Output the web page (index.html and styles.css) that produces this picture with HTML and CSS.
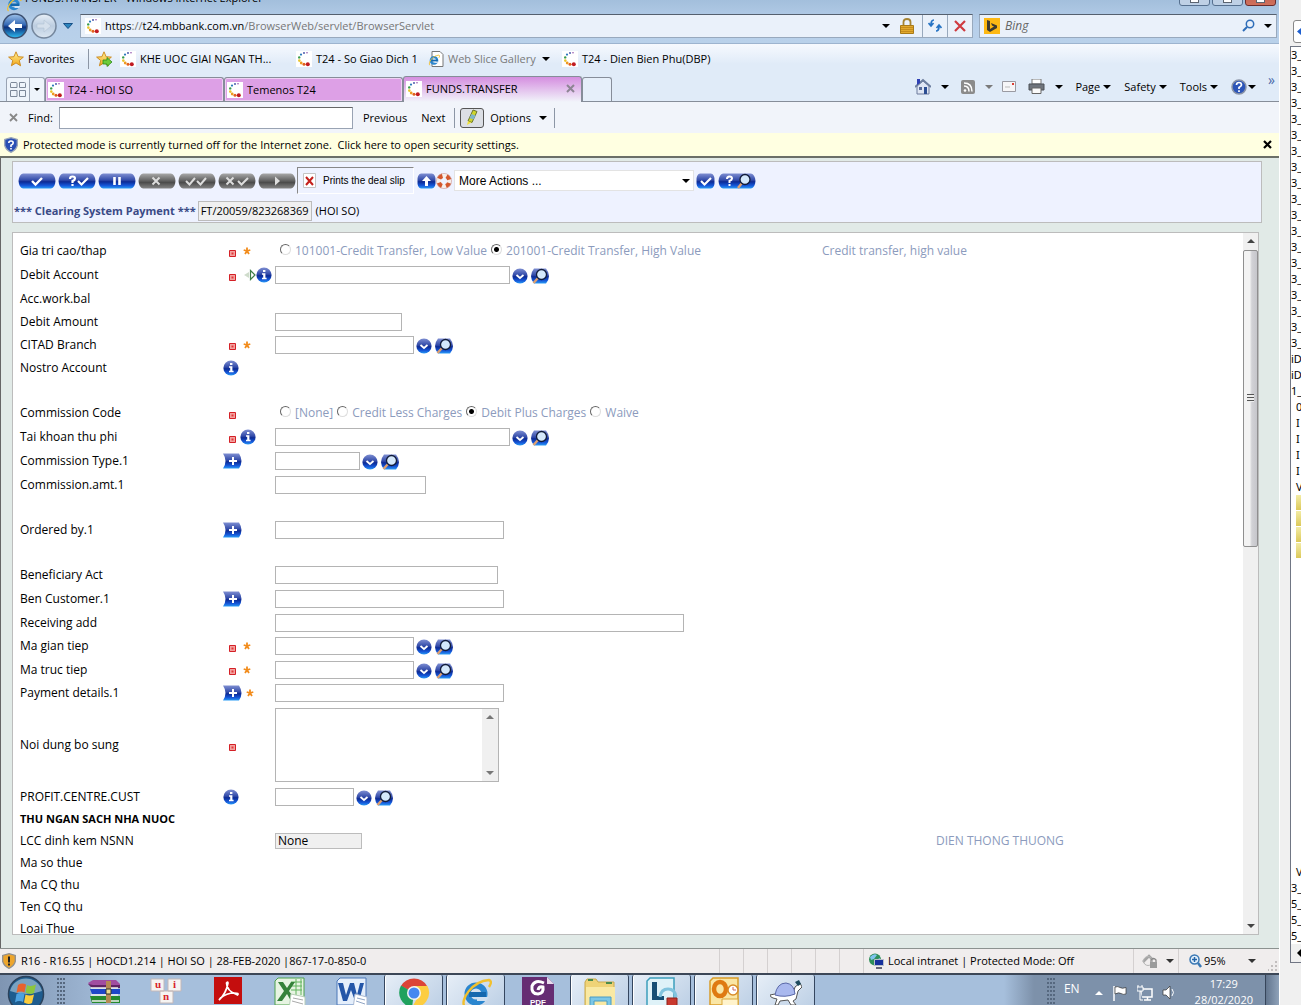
FILE: index.html
```html
<!DOCTYPE html>
<html lang="en">
<head>
<meta charset="utf-8">
<title>FUNDS.TRANSFER - Windows Internet Explorer</title>
<link rel="stylesheet" href="styles.css">
</head>
<body>
<svg class="defs" aria-hidden="true">
  <defs>
    <linearGradient id="blue" x1="0" y1="0" x2="0" y2="1"><stop offset="0" stop-color="#7f8fd2"/><stop offset=".45" stop-color="#3049a8"/><stop offset=".55" stop-color="#0c2a94"/><stop offset=".8" stop-color="#1557d8"/><stop offset="1" stop-color="#2a9cf5"/></linearGradient>
    <linearGradient id="gray" x1="0" y1="0" x2="0" y2="1"><stop offset="0" stop-color="#a8a8a8"/><stop offset=".45" stop-color="#666"/><stop offset=".6" stop-color="#4c4c4c"/><stop offset="1" stop-color="#858585"/></linearGradient>
    <linearGradient id="orb" x1="0" y1="0" x2="0" y2="1"><stop offset="0" stop-color="#9fc3ea"/><stop offset=".45" stop-color="#3468b4"/><stop offset=".55" stop-color="#0c2f7c"/><stop offset="1" stop-color="#2fc0f4"/></linearGradient>
    <linearGradient id="pale" x1="0" y1="0" x2="0" y2="1"><stop offset="0" stop-color="#e9f0f8"/><stop offset=".5" stop-color="#bccde0"/><stop offset="1" stop-color="#dbe6f1"/></linearGradient>
    <linearGradient id="gold" x1="0" y1="0" x2="0" y2="1"><stop offset="0" stop-color="#fff29a"/><stop offset="1" stop-color="#f2a516"/></linearGradient>
  </defs>
  <symbol id="t24" viewBox="0 0 16 16"><path fill="#fff" d="M0 0h16v16H0z"/><circle cx="11" cy="1.8" r=".7" fill="#7b2f9a"/><circle cx="8" cy="2" r=".9" fill="#3a4aa5"/><circle cx="5" cy="3.6" r="1.1" fill="#2c7abc"/><circle cx="3.2" cy="6.4" r="1.2" fill="#3a9c4a"/><circle cx="3.3" cy="9.6" r="1.3" fill="#e9c52c"/><circle cx="5.2" cy="12" r="1.4" fill="#ee9a22"/><circle cx="8" cy="13.3" r="1.5" fill="#e1601d"/><circle cx="11.8" cy="13.3" r="2" fill="#c11b22"/></symbol>
  <symbol id="ie" viewBox="0 0 32 32"><circle cx="16" cy="17" r="8.5" fill="none" stroke="#2a86cf" stroke-width="6"/><path d="M9 15h17v5H9z" fill="#1467ae"/><path d="M17 20h12l-3 4h-9z" fill="#cfe0f2"/><path d="M5 30C-1 24 12 4 29 3c3 1 2 4 0 7" fill="none" stroke="#f2c02e" stroke-width="2.4"/></symbol>
  <symbol id="star" viewBox="0 0 16 16"><path d="M8 .8l2.1 4.9 5.3.4-4.1 3.4 1.3 5.3L8 11.9l-4.6 2.9 1.3-5.3L.6 6.1l5.3-.4z" fill="url(#gold)" stroke="#c98618" stroke-width=".9"/></symbol>
  <symbol id="info" viewBox="0 0 16 16"><circle cx="8" cy="8" r="7.6" fill="url(#blue)"/><path d="M7 3h2.4v2H7zM6 6.3h3.4v4.5h1.2v1.4H6v-1.4h1.2V7.7H6z" fill="#fff"/></symbol>
  <symbol id="drop" viewBox="0 0 16 16"><circle cx="8" cy="8" r="7.6" fill="url(#blue)"/><path d="M4.5 7L8 10l3.500-3" fill="none" stroke="#fff" stroke-width="1.8"/></symbol>
  <symbol id="find" viewBox="0 0 20 16"><path d="M4 .5h12q6 7.500 0 15H4q-6-7.500 0-15z" fill="url(#blue)"/><path d="M8 10l-4.500 5" stroke="#e0a070" stroke-width="2.400"/><circle cx="11.500" cy="6.500" r="5" fill="#d4e8fb" stroke="#111c3a" stroke-width="1.300"/></symbol>
  <symbol id="plus" viewBox="0 0 20 16"><path d="M0 .5h16q5 7.500 0 15H0q5-7.500 0-15z" fill="url(#blue)"/><path d="M6 8h8M10 4v8" stroke="#fff" stroke-width="2"/></symbol>
  <symbol id="req" viewBox="0 0 7 7"><path d="M.5.5h6v6h-6z" fill="#f3a2a0" stroke="#d42026"/><path d="M2.500 2.500h2v2h-2z" fill="#e03a3a"/></symbol>
  <symbol id="ast" viewBox="0 0 8 8"><path d="M4 .5v3.500M4 4L.7 3M4 4l3.300-1M4 4L2 7M4 4l2 3" stroke="#f28c1c" stroke-width="1.800"/></symbol>
  <symbol id="tri" viewBox="0 0 8 4"><path d="M0 0h8L4 4z" fill="currentColor"/></symbol>
  <symbol id="triup" viewBox="0 0 8 4"><path d="M0 4h8L4 0z" fill="currentColor"/></symbol>
  <symbol id="dots" viewBox="0 0 8 32"><g fill="#56687f"><path id="dr" d="M0 1h2v2H0zM3 1h2v2H3zM6 1h2v2H6z"/><use href="#dr" y="4"/><use href="#dr" y="8"/><use href="#dr" y="12"/><use href="#dr" y="16"/><use href="#dr" y="20"/><use href="#dr" y="24"/><use href="#dr" y="28"/></g></symbol>
  <symbol id="pb" viewBox="0 0 38 16"><path d="M5 .5h28q4 1 4.500 7.500-.5 6.500-4.500 7.500H5Q1 14.500.5 8 1 1.500 5 .5z"/></symbol>
</svg>

<div class="screen">
<div class="desktop">
  <header class="frame">
    <div class="titlebar">
      <svg class="i16"><use href="#ie"/></svg><span class="title">FUNDS.TRANSFER - Windows Internet Explorer</span>
      <span class="caption"><button aria-label="Minimize"><i></i></button><button aria-label="Restore"><i></i></button><button class="close" aria-label="Close"><i></i></button></span>
    </div>
    <div class="address">
      <button class="plain" aria-label="Back"><svg width="26" height="26" viewBox="0 0 26 26"><circle cx="13" cy="13" r="12" fill="url(#orb)" stroke="#3b4f70" stroke-width="1.500"/><path d="M6 13l7-6v4h7v4h-7v4z" fill="#fff"/></svg></button>
      <button class="plain" aria-label="Forward"><svg width="26" height="26" viewBox="0 0 26 26"><circle cx="13" cy="13" r="12" fill="url(#pale)" stroke="#74869c" stroke-width="1.500"/><path d="M20 13l-7-6v4H6v4h7v4z" fill="#d5e0ec" stroke="#b3c3d4" stroke-width=".6"/></svg></button>
      <button class="plain recent" aria-label="Recent pages"><svg width="10" height="6"><path d="M.5.5h9L5 5.500z" fill="#2b84bd" stroke="#174f86"/></svg></button>
      <div class="urlbox">
        <svg class="i16"><use href="#t24"/></svg>
        <span class="url"><b>https</b>://<b>t24.mbbank.com.vn</b>/BrowserWeb/servlet/BrowserServlet</span>
        <svg class="tri"><use href="#tri"/></svg>
        <svg class="lock" width="14" height="16" viewBox="0 0 14 16"><path d="M3.500 8V4q0-3 3.500-3t3.500 3v4" fill="none" stroke="#a58434" stroke-width="1.800"/><path d="M.5 7.500h13v8H.5z" fill="#e2a92c" stroke="#a97a17"/><path d="M1 9.500h12M1 11.500h12M1 13.500h12" stroke="#c68c1c"/></svg>
        <button class="cell" aria-label="Refresh"><svg width="14" height="13" viewBox="0 0 14 13"><path d="M6 1Q3 1 3 6M0.500 4L3 7l2.500-3M8 12q3 0 3-5M8.500 9L11 6l2.500 3" fill="none" stroke="#2573c4" stroke-width="1.700"/></svg></button>
        <button class="cell" aria-label="Stop"><svg width="12" height="12"><path d="M1 1l10 10M11 1L1 11" stroke="#cf3b40" stroke-width="2.200"/></svg></button>
      </div>
      <div class="searchbox">
        <svg width="16" height="16"><path d="M0 0h16v16H0z" fill="#fdb813"/><path d="M3 2l3 1v8l4-2.500-2-1L7 5l6 2.500V10l-7 4-3-2z" fill="#3e3a30"/></svg>
        <input type="text" placeholder="Bing" aria-label="Search">
        <svg width="13" height="13"><circle cx="8" cy="5" r="3.700" fill="none" stroke="#2d6db8" stroke-width="1.500"/><path d="M5 8l-4 4" stroke="#2d6db8" stroke-width="2"/></svg>
        <svg class="tri"><use href="#tri"/></svg>
      </div>
    </div>
  </header>

  <nav class="favbar">
    <svg class="i16"><use href="#star"/></svg><span class="favlabel">Favorites</span><i class="vsep"></i>
    <svg class="i16" viewBox="0 0 16 16"><use href="#star"/><path d="M7 9h4V6.500l5 4.500-5 4.500V13H7z" fill="#6ecb3a" stroke="#2a8a1c" stroke-width=".8"/></svg>
    <a href="#" class="fav f1"><svg class="i16"><use href="#t24"/></svg>KHE UOC GIAI NGAN TH...</a>
    <a href="#" class="fav f2"><svg class="i16"><use href="#t24"/></svg>T24 - So Giao Dich 1</a>
    <a href="#" class="fav f3 dim"><svg class="i16" viewBox="0 0 16 16"><path d="M4 .5h8l3 3v12H4z" fill="#fff" stroke="#777"/><use href="#ie" width="12" height="12" y="3"/></svg>Web Slice Gallery <svg class="tri"><use href="#tri"/></svg></a>
    <a href="#" class="fav"><svg class="i16"><use href="#t24"/></svg>T24 - Dien Bien Phu(DBP)</a>
  </nav>

  <div class="tabrow">
    <button class="quick" aria-label="Quick tabs"><svg width="16" height="15"><path d="M1 .5h5q1 0 1 1v4H.5V1.500zM9.500.5h5q1 0 1 1v4h-6zM.5 8.500H7v6H.5zM9.500 8.500h6v6h-6z" fill="none" stroke="#7c8899"/></svg></button><button class="quick arrow" aria-label="Tab list"><svg class="tri small"><use href="#tri"/></svg></button>
    <a href="#" class="tab"><svg class="i16"><use href="#t24"/></svg>T24 - HOI SO</a>
    <a href="#" class="tab"><svg class="i16"><use href="#t24"/></svg>Temenos T24</a>
    <a href="#" class="tab on"><svg class="i16"><use href="#t24"/></svg>FUNDS.TRANSFER<svg class="x" width="9" height="9"><path d="M1 1l7 7M8 1L1 8" stroke="#8d8594" stroke-width="2"/></svg></a>
    <button class="newtab" aria-label="New tab"></button>
    <div class="commands">
      <svg width="16" height="17" viewBox="0 0 16 17"><path d="M2 8v8h12V8L8 3z" fill="#dfe6f4" stroke="#6c7a9c"/><path d="M0 9l8-7 8 7" fill="none" stroke="#6e7f9f" stroke-width="1.800"/><path d="M2 1h3v4L2 7z" fill="#2f40b4"/><path d="M9 9h3v7H9z" fill="#2b4d92"/><path d="M4 9h3v3H4z" fill="#5a6c99"/></svg>
      <svg class="tri c1"><use href="#tri"/></svg>
      <svg width="14" height="14"><rect width="14" height="14" rx="2" fill="#8b8b8b"/><circle cx="4" cy="10.500" r="1.300" fill="#fff"/><path d="M3 6q5 0 5 5.500M3 3q8 0 8 8.500" fill="none" stroke="#fff" stroke-width="1.500"/></svg>
      <svg class="tri c1 dim"><use href="#tri"/></svg>
      <svg class="c2" width="14" height="11"><path d="M.5.500h13v10H.5z" fill="#f6f6f8" stroke="#9a9aa2"/><path d="M10 2h2v2h-2z" fill="#dc4036"/><path d="M3 6h5" stroke="#bbb"/></svg>
      <svg class="c3" width="17" height="15"><path d="M4 0h9v5H4z" fill="#fff" stroke="#777"/><path d="M1 5h15v6H1z" fill="#6f747c" stroke="#4c5057"/><path d="M4 9h9v5.500H4z" fill="#fafafa" stroke="#666"/></svg>
      <svg class="tri c1"><use href="#tri"/></svg>
      <button class="cmd">Page <svg class="tri"><use href="#tri"/></svg></button>
      <button class="cmd">Safety <svg class="tri"><use href="#tri"/></svg></button>
      <button class="cmd">Tools <svg class="tri"><use href="#tri"/></svg></button>
      <button class="cmd help" aria-label="Help"><svg width="16" height="16"><circle cx="8" cy="8" r="7" fill="#2c55b8" stroke="#8a93a6" stroke-width="1.500"/><path d="M5.500 6Q5.500 3.500 8 3.500T10.500 6Q10.500 7 8 8.500V10M8 11.300v1.700" fill="none" stroke="#fff" stroke-width="1.700"/></svg><svg class="tri"><use href="#tri"/></svg></button>
      <span class="more">»</span>
    </div>
  </div>

  <div class="findbar">
    <svg width="9" height="9"><path d="M1 1l7 7M8 1L1 8" stroke="#888" stroke-width="1.800"/></svg>
    <label for="find-text">Find:</label><input id="find-text" type="text">
    <button class="plain prev">Previous</button><button class="plain">Next</button><i class="vsep"></i>
    <button class="hilite" aria-label="Highlight all matches"><svg width="14" height="17"><path d="M8 1l4 1.500-5 11-4-1.500z" fill="#cfd62a" stroke="#6a7430"/><path d="M6.500 5l4 1.500-2 4-4-1.500z" fill="#7fb6c9"/><path d="M3 12l3.500 1.500L2 16z" fill="#efe23a"/></svg></button>
    <button class="plain options">Options <svg class="tri"><use href="#tri"/></svg></button><i class="vsep"></i>
  </div>

  <div class="infobar">
    <svg width="14" height="16" viewBox="0 0 14 16"><path d="M7 .7l6.300 1.800v6Q12 13 7 15.300 2 13 .7 8.500v-6z" fill="#2a4fb4" stroke="#99a5b8" stroke-width="1.300"/><path d="M4.800 6Q4.800 4 7 4t2.200 2Q9.200 7 7 8.300V10M7 11v1.600" fill="none" stroke="#fff" stroke-width="1.600"/></svg>
    <span>Protected mode is currently turned off for the Internet zone.&nbsp; Click here to open security settings.</span>
    <button class="plain" aria-label="Dismiss"><svg width="9" height="9"><path d="M1 1l7 7M8 1L1 8" stroke="#000" stroke-width="2.200"/></svg></button>
  </div>

  <main class="page">
    <section class="toolbox">
      <div class="tools">
        <div class="pills">
        <button class="pill" aria-label="Commit"><svg width="38" height="16"><use href="#pb" fill="url(#blue)"/><path d="M14 8l3.500 3.500L24 5" fill="none" stroke="#fff" stroke-width="2.400"/></svg></button>
        <button class="pill" aria-label="Validate"><svg width="38" height="16"><use href="#pb" fill="url(#blue)"/><path d="M12 6q0-2.500 2.500-2.500T17 5.500q0 1.500-2.500 2.500v2M14.500 11v2M20 8l3.500 3.500L30 5" fill="none" stroke="#fff" stroke-width="2.200"/></svg></button>
        <button class="pill" aria-label="Hold"><svg width="38" height="16"><use href="#pb" fill="url(#blue)"/><path d="M16.500 4v8M21.500 4v8" stroke="#fff" stroke-width="2.600"/></svg></button>
        <button class="pill" aria-label="Delete"><svg width="38" height="16"><use href="#pb" fill="url(#gray)"/><path d="M14.500 4.500l7 7M21.500 4.500l-7 7" stroke="#ddd" stroke-width="2"/></svg></button>
        <button class="pill" aria-label="Authorise"><svg width="38" height="16"><use href="#pb" fill="url(#gray)"/><path d="M8 8l3.500 3.500L17 5M19 8l3.500 3.500L28 5" fill="none" stroke="#ddd" stroke-width="2"/></svg></button>
        <button class="pill" aria-label="Reverse"><svg width="38" height="16"><use href="#pb" fill="url(#gray)"/><path d="M8.500 4.500l7 7M15.500 4.500l-7 7M20 8l3.500 3.500L30 5" fill="none" stroke="#ddd" stroke-width="2"/></svg></button>
        <button class="pill" aria-label="Next"><svg width="38" height="16"><use href="#pb" fill="url(#gray)"/><path d="M17 3.500l5 4.500-5 4.500z" fill="#ddd"/></svg></button>
        </div>
        <button class="slip"><svg width="13" height="15"><path d="M.5.500h12v14H.5z" fill="#fff" stroke="#c4c4c4"/><path d="M3 4l7 8M10 4l-7 8" stroke="#c4201c" stroke-width="2"/></svg>Prints the deal slip</button>
        <button class="pill" aria-label="Go up"><svg width="19" height="16"><path d="M4 .5h11q4 1 3.500 7.500.5 6.500-3.500 7.500H4Q0 14.500.5 8 0 1.500 4 .5z" fill="url(#blue)"/><path d="M9.500 3l4.500 5h-3v5H8V8H5z" fill="#fff"/></svg></button>
        <button class="pill" aria-label="Help"><svg width="16" height="16"><circle cx="8" cy="8" r="5.500" fill="none" stroke="#f6eeea" stroke-width="4.500"/><circle cx="8" cy="8" r="5.500" fill="none" stroke="#d4572c" stroke-width="4.500" stroke-dasharray="4.300 4.340" stroke-dashoffset="-2"/><circle cx="8" cy="8" r="7.600" fill="none" stroke="#c99" stroke-width=".6"/></svg></button>
        <span class="select"><select aria-label="More actions"><option>More Actions ...</option></select><svg class="tri"><use href="#tri"/></svg></span>
        <button class="pill go" aria-label="Go"><svg width="19" height="16"><path d="M4 .5h11q4 1 3.500 7.500.5 6.500-3.500 7.500H4Q0 14.500.5 8 0 1.500 4 .5z" fill="url(#blue)"/><path d="M5 8l3.500 3.500L15 5" fill="none" stroke="#fff" stroke-width="2.200"/></svg></button>
        <button class="pill" aria-label="Query"><svg width="38" height="16"><use href="#pb" fill="url(#blue)"/><path d="M9 6q0-2.500 2.500-2.500T14 5.500q0 1.500-2.500 2.500v2M11.500 11v2" fill="none" stroke="#fff" stroke-width="2"/><path d="M24 10l-4 5" stroke="#e0a070" stroke-width="2.400"/><circle cx="27" cy="6.500" r="5" fill="#d4e8fb" stroke="#111c3a" stroke-width="1.300"/></svg></button>
      </div>
      <div class="record"><b>*** Clearing System Payment ***</b><span class="ref">FT/20059/823268369</span><span>(HOI SO)</span></div>
    </section>

    <section class="pane">
      <form class="form">
        <div class="row noted"><span>Gia tri cao/thap</span><span class="marks"><svg class="req"><use href="#req"/></svg><svg class="ast"><use href="#ast"/></svg></span>
          <span class="radios"><label><input type="radio" name="v">101001-Credit Transfer, Low Value</label><label><input type="radio" name="v" checked>201001-Credit Transfer, High Value</label></span><span class="note">Credit transfer, high value</span></div>
        <div class="row"><label for="a1">Debit Account</label><span class="marks"><svg class="req"><use href="#req"/></svg><svg class="arr" width="12" height="12"><path d="M0 6l5-3v6z" fill="#cfdccb"/><path d="M6.500 1.500v9L11 6z" fill="#fff" stroke="#3f7d47" stroke-width="1.200"/></svg><svg class="i16"><use href="#info"/></svg></span>
          <span class="field"><input id="a1" class="w235"><svg class="i16"><use href="#drop"/></svg><svg class="i20"><use href="#find"/></svg></span></div>
        <div class="row h23"><span>Acc.work.bal</span></div>
        <div class="row h23"><label for="a2">Debit Amount</label><span></span><span class="field"><input id="a2" class="w127"></span></div>
        <div class="row h23"><label for="a3">CITAD Branch</label><span class="marks"><svg class="req"><use href="#req"/></svg><svg class="ast"><use href="#ast"/></svg></span><span class="field"><input id="a3" class="w139"><svg class="i16"><use href="#drop"/></svg><svg class="i20"><use href="#find"/></svg></span></div>
        <div class="row h23"><span>Nostro Account</span><span class="marks"><svg class="i16"><use href="#info"/></svg></span></div>
        <div class="row h22"></div>
        <div class="row"><span>Commission Code</span><span class="marks"><svg class="req"><use href="#req"/></svg></span>
          <span class="radios"><label><input type="radio" name="c">[None]</label><label><input type="radio" name="c">Credit Less Charges</label><label><input type="radio" name="c" checked>Debit Plus Charges</label><label><input type="radio" name="c">Waive</label></span></div>
        <div class="row"><label for="a4">Tai khoan thu phi</label><span class="marks"><svg class="req tight"><use href="#req"/></svg><svg class="i16"><use href="#info"/></svg></span><span class="field"><input id="a4" class="w235"><svg class="i16"><use href="#drop"/></svg><svg class="i20"><use href="#find"/></svg></span></div>
        <div class="row"><label for="a5">Commission Type.1</label><span class="marks"><svg class="i20"><use href="#plus"/></svg></span><span class="field"><input id="a5" class="w85"><svg class="i16"><use href="#drop"/></svg><svg class="i20"><use href="#find"/></svg></span></div>
        <div class="row"><label for="a6">Commission.amt.1</label><span></span><span class="field"><input id="a6" class="w151"></span></div>
        <div class="row h21"></div>
        <div class="row"><label for="a7">Ordered by.1</label><span class="marks"><svg class="i20"><use href="#plus"/></svg></span><span class="field"><input id="a7" class="w229"></span></div>
        <div class="row h21"></div>
        <div class="row"><label for="a8">Beneficiary Act</label><span></span><span class="field"><input id="a8" class="w223"></span></div>
        <div class="row"><label for="a9">Ben Customer.1</label><span class="marks"><svg class="i20"><use href="#plus"/></svg></span><span class="field"><input id="a9" class="w229"></span></div>
        <div class="row h23"><label for="b1">Receiving add</label><span></span><span class="field"><input id="b1" class="w409"></span></div>
        <div class="row"><label for="b2">Ma gian tiep</label><span class="marks"><svg class="req"><use href="#req"/></svg><svg class="ast"><use href="#ast"/></svg></span><span class="field"><input id="b2" class="w139"><svg class="i16"><use href="#drop"/></svg><svg class="i20"><use href="#find"/></svg></span></div>
        <div class="row h23"><label for="b3">Ma truc tiep</label><span class="marks"><svg class="req"><use href="#req"/></svg><svg class="ast"><use href="#ast"/></svg></span><span class="field"><input id="b3" class="w139"><svg class="i16"><use href="#drop"/></svg><svg class="i20"><use href="#find"/></svg></span></div>
        <div class="row"><label for="b4">Payment details.1</label><span class="marks"><svg class="i20"><use href="#plus"/></svg><svg class="ast near"><use href="#ast"/></svg></span><span class="field"><input id="b4" class="w229"></span></div>
        <div class="row h80"><label for="b5">Noi dung bo sung</label><span class="marks"><svg class="req"><use href="#req"/></svg></span><span class="area"><textarea id="b5"></textarea><span class="bar"><svg class="tri"><use href="#triup"/></svg><svg class="tri"><use href="#tri"/></svg></span></span></div>
        <div class="row h23"><label for="b6">PROFIT.CENTRE.CUST</label><span class="marks"><svg class="i16"><use href="#info"/></svg></span><span class="field"><input id="b6" class="w79"><svg class="i16"><use href="#drop"/></svg><svg class="i20"><use href="#find"/></svg></span></div>
        <div class="row h22"><b>THU NGAN SACH NHA NUOC</b></div>
        <div class="row h22 noted far"><span>LCC dinh kem NSNN</span><span></span><span class="fixed">None</span><span class="note">DIEN THONG THUONG</span></div>
        <div class="row h22"><span>Ma so thue</span></div>
        <div class="row h22"><span>Ma CQ thu</span></div>
        <div class="row h22"><span>Ten CQ thu</span></div>
        <div class="row h22"><span>Loai Thue</span></div>
      </form>
      <div class="scroll" aria-hidden="true"><svg class="tri"><use href="#triup"/></svg><div class="track"><div class="thumb"><i></i></div></div><svg class="tri"><use href="#tri"/></svg></div>
    </section>
  </main>

  <div class="status">
    <svg width="14" height="16" viewBox="0 0 14 16"><path d="M7 .7l6.300 1.800v6Q12 13 7 15.300 2 13 .7 8.500v-6z" fill="#eda52c" stroke="#8f8f8f" stroke-width="1.300"/><path d="M7 3.500v6M7 10.500v2" stroke="#222" stroke-width="2"/></svg>
    <span class="grow">R16 - R16.55 | HOCD1.214 | HOI SO | 28-FEB-2020 |867-17-0-850-0</span>
    <i class="slot"></i><i class="slot"></i><i class="slot"></i><i class="slot"></i><i class="slot"></i><i class="slot"></i>
    <div class="zone"><svg width="16" height="16"><circle cx="7" cy="6.500" r="6" fill="#2f8f59"/><path d="M2 4q4-4 7-2l-3 4-3 1zM8 7l4-2v5H8z" fill="#7fc3ee"/><path d="M6.500 6.500h9v6h-9z" fill="#16309c" stroke="#b9bfca"/><path d="M8 15h6" stroke="#667" stroke-width="2"/></svg>Local intranet | Protected Mode: Off</div>
    <div class="privacy"><svg width="17" height="15"><path d="M1 8l6-6 4 4" fill="none" stroke="#a5a5a5" stroke-width="2.500"/><circle cx="6" cy="7" r="4.500" fill="none" stroke="#b5b5b5"/><path d="M9 9V6q2.500-3 5 0v3" fill="none" stroke="#888" stroke-width="1.300"/><path d="M8 8h7v6H8z" fill="#9b9b9b"/></svg><svg class="tri"><use href="#tri"/></svg></div>
    <div class="zoom"><svg width="13" height="14"><circle cx="5.500" cy="5.500" r="4.500" fill="#e4f0fb" stroke="#3a78b4" stroke-width="1.500"/><path d="M3 5.500h5M5.500 3v5" stroke="#2565a8" stroke-width="1.500"/><path d="M9 9l3 4" stroke="#3a78b4" stroke-width="2.500"/></svg>95%<svg class="tri"><use href="#tri"/></svg><svg class="grip" width="10" height="10"><path d="M7 0h2v2H7zM7 4h2v2H7zM3 4h2v2H3zM7 8h2v2H7zM3 8h2v2H3zM0 8h1v2H0z" fill="#c2bebe"/></svg></div>
  </div>

  <footer class="taskbar">
    <button class="start" aria-label="Start"><svg width="38" height="38" viewBox="0 0 38 38"><circle cx="19" cy="19" r="17.500" fill="#1e5c8e" stroke="#2b425c" stroke-width="1.500"/><path d="M3 16a16.500 16.500 0 0 1 32 0q-16 6-32 0z" fill="#9ab9d0" opacity=".75"/><path d="M11 10q4-2.500 8-.5l-1.500 8q-4-2-8 .5z" fill="#e8622c"/><path d="M20 10q4 2 9-.5L27 18q-4 2-8.500-.5z" fill="#8cc63e"/><path d="M9.500 19q4-2 8 0L16 27q-4-2-8 .5z" fill="#4da2e0"/><path d="M18.500 19.500q4 2 8.500 0L25 28q-4 2-8-.5z" fill="#fccc3c"/></svg></button>
    <svg class="dots"><use href="#dots"/></svg>
    <div class="tasks">
      <button aria-label="WinRAR"><svg width="32" height="32"><path d="M0 6l5-3h23l4 4v3H3z" fill="#a14da0"/><path d="M0 7l4 4h28V8H5z" fill="#5e2463"/><path d="M2 12h30v5H4z" fill="#1e47c8"/><path d="M2 19h30v7H4z" fill="#268a2e"/><path d="M3 11h27M3 18h27M4 24h27" stroke="#eee" stroke-width="1.500"/><path d="M18 4h5v22h-5z" fill="#b58a52"/><path d="M18 12h5v5h-5z" fill="#eadb8c" stroke="#333"/></svg></button>
      <button aria-label="UniKey"><svg width="32" height="32" font-family="Liberation Serif, serif" font-weight="bold" font-size="11" fill="#d8242a"><g fill="#f6f4f2" stroke="#c4b8b8"><path d="M1 2h13v12H1zM18 2h13v12H18zM10 14h13v12H10z"/></g><text x="5" y="11">u</text><text x="23" y="11">i</text><text x="13" y="23">n</text></svg></button>
      <button aria-label="Adobe Reader"><svg width="32" height="32"><path d="M2 0h28v27H2z" fill="#c40e0e"/><path d="M7 23q7-6 9-17 0-2-1.500 0 0 8 11 12 2-2-3-2-8 0-14 5z" fill="none" stroke="#fff" stroke-width="1.700"/></svg></button>
      <button aria-label="Excel"><svg width="32" height="32"><path d="M4 1h26v27H1V4z" fill="#e7f4e2" stroke="#4da04c"/><path d="M17 5h11M17 9h11M17 13h11M22 2v16M27 2v16" stroke="#60b45c"/><path d="M4 5h5l4 6 4-6h4l-6 9 7 10h-5l-4-7-5 7H3l7-10z" fill="#35823a"/><path d="M17 17l14 3v12H15z" fill="#fff" stroke="#b8ceb8"/><path d="M19 21l10 2M18 24l11 3" stroke="#aaa"/></svg></button>
      <button aria-label="Word"><svg width="32" height="32"><path d="M4 1h26v27H1V4z" fill="#e4eefb" stroke="#4a76b8"/><path d="M2 6h5l3 12 4-12h4l3 12 3-12h4l-5 18h-4l-4-11-4 11H7z" fill="#2456a8"/><path d="M19 17l12 3v12H17z" fill="#fff" stroke="#aab9d0"/><path d="M21 21l8 2M20 24l9 3" stroke="#8fa4c4"/></svg></button>
      <button class="open" aria-label="Chrome"><svg width="32" height="32"><path d="M16 16L3 9a15 15 0 0 1 26 0z" fill="#dc4437"/><path d="M16 16L3 8.500a15 15 0 0 0 11 22z" fill="#1fa15d"/><path d="M16 16h6l-8 14.500A15 15 0 0 0 29.500 9H16z" fill="#fdcd40"/><circle cx="16" cy="16" r="7" fill="#f4f4f4"/><circle cx="16" cy="16" r="5.500" fill="#4687f0"/></svg></button>
      <button class="open" aria-label="Internet Explorer"><svg width="32" height="32"><use href="#ie"/></svg></button>
      <button aria-label="PDF reader"><svg width="32" height="32"><path d="M0 0h25l7 7v25H0z" fill="#662d73"/><path d="M25 0l7 7h-7z" fill="#e8dced"/><path d="M22 6q-9-4-12 3-1 8 6 8 6-1 5-7-4-1-5 3" fill="none" stroke="#fff" stroke-width="3"/><text x="16" y="28" text-anchor="middle" font-family="Liberation Sans" font-weight="bold" font-size="8" fill="#fff">PDF</text></svg></button>
      <button class="open" aria-label="Explorer"><svg width="32" height="32"><path d="M1 5l2-3h9l2 3h16v27H1z" fill="#efd377" stroke="#c9a94c"/><path d="M2 10h29v22H2z" fill="#f9e9a4"/><path d="M4 3h5M22 6h6" stroke="#4a8c4a" stroke-width="2"/><path d="M6 32V20h21v12h-4v-8H10v8z" fill="#7bc7e6" stroke="#4a9cc4"/></svg></button>
      <button class="open" aria-label="Lync"><svg width="32" height="32"><path d="M4 1h24v28H1V4z" fill="#dff2f8" stroke="#3c9fbc" stroke-width="1.500"/><path d="M6 5h5v14h7v4H6z" fill="#164e74"/><path d="M14 20q1-8 8-8t8 8M30 18q-2 9-9 9" fill="none" stroke="#82c4de" stroke-width="3"/><path d="M21 21h10v9H21z" fill="#c8382e" stroke="#8e2018"/></svg></button>
      <button class="open" aria-label="Outlook"><svg width="32" height="32"><path d="M5 1h25v27H2V4z" fill="#fae6a5" stroke="#d99c28" stroke-width="1.500"/><ellipse cx="12" cy="12" rx="6" ry="7" fill="none" stroke="#df7a12" stroke-width="4.500"/><circle cx="25" cy="13" r="5" fill="#fff" stroke="#d98c28" stroke-width="1.500"/><path d="M25 10v3h3" fill="none" stroke="#c66"/><path d="M14 22h16v8H14z" fill="#fff3cc" stroke="#d9a83c"/></svg></button>
      <button class="open" aria-label="Turtle"><svg width="32" height="32"><path d="M3 21q-3-1-3-3l5-1h18l2-7 5-4 2 4-4 4-2 8-3 2 3 4h-5l-3-5-8 1-2 4H5l2-6z" fill="#fff" stroke="#555"/><path d="M5 18q2-12 11-12 8 1 9 11-10 4-20 1z" fill="#a9b8ee" stroke="#5a68a8"/><path d="M25 5l4-2 2 4-3 2z" fill="#1d4a5c"/></svg></button>
    </div>
    <div class="tray">
      <svg class="dots"><use href="#dots"/></svg><span class="lang">EN</span>
      <svg class="tri up"><use href="#triup"/></svg>
      <svg width="16" height="16"><path d="M2 1v15" stroke="#fff" stroke-width="1.500"/><path d="M3 2q3-1 5 .5t6 0V9q-3 1-5-.5T3 9z" fill="#fff" stroke="#333" stroke-width=".7"/></svg>
      <svg width="16" height="16"><path d="M4 4h11v8H4zM7 15h7M10.500 12v3" fill="none" stroke="#fff" stroke-width="1.500"/><path d="M0 2h6v4H0zM1 0v2M5 0v2M3 6v9h3" fill="#7d91aa" stroke="#fff"/></svg>
      <svg width="14" height="16"><path d="M1 5h3l4-4v13l-4-4H1z" fill="#fff" stroke="#333" stroke-width=".7"/><path d="M10 4q3 3.500 0 7" fill="none" stroke="#fff"/></svg>
      <span class="clock">17:29<br>28/02/2020</span>
      <button class="peek" aria-label="Show desktop"></button>
    </div>
  </footer>
</div>

<aside class="behind">
  <div class="edge"><button aria-label="Back"><svg width="8" height="9"><path d="M0 4.500L5 0v3h3v3H5v3z" fill="#1d5fd0"/></svg></button></div>
  <div class="list">
    <ul>
      <li>3_</li><li>3_</li><li>3_</li><li>3_</li><li>3_</li><li>3_</li><li>3_</li><li>3_</li><li>3_</li><li>3_</li><li>3_</li><li>3_</li><li>3_</li><li>3_</li><li>3_</li><li>3_</li><li>3_</li><li>3_</li><li>3_</li>
      <li>iD</li><li>iD</li><li>1_</li><li class="in">0</li><li class="in">I</li><li class="in">I</li><li class="in">I</li><li class="in">I</li><li class="in">V</li>
      <li class="folder"></li><li class="folder"></li><li class="folder"></li><li class="folder"></li>
    </ul>
    <ul class="low"><li class="in">V</li><li>3_</li><li>5_</li><li>5_</li><li>5_</li></ul>
    <div class="foot"><svg width="4" height="8"><path d="M0 4l4-4v8z"/></svg></div>
  </div>
</aside>
</div>
</body>
</html>
```
FILE: styles.css
```css
* { box-sizing: border-box; }
body { margin: 0; background: #f0f0f0; font: 11px/16px "Open Sans", sans-serif; color: #000; }
svg { display: block; flex: none; }
button, input, select, textarea { font: inherit; color: inherit; margin: 0; padding: 0; }
button { border: 0; background: none; }
a { color: inherit; text-decoration: none; }
ul { list-style: none; margin: 0; padding: 0; }
.defs { position: absolute; width: 0; height: 0; }
.i16 { width: 16px; height: 16px; }
.i20 { width: 20px; height: 16px; }
.tri { width: 8px; height: 4px; }
.tri.small { width: 6px; height: 3px; }
.vsep { width: 1px; height: 20px; background: #8c96a5; }
.plain { display: flex; align-items: center; }

.screen { display: flex; height: 100vh; overflow: hidden; }
.desktop { flex: 1; min-width: 0; display: flex; flex-direction: column; }

/* window frame and address row */
.frame { height: 44px; flex: none; background: linear-gradient(#a3bfdc, #b7cfea 24px, #b9d1ea); border-bottom: 1px solid #9db4cf; }
.titlebar { display: flex; align-items: flex-end; height: 6px; padding: 0 3px 0 6px; }
.titlebar .i16 { margin-bottom: -6px; }
.title { margin-left: 3px; flex: 1; }
.caption { display: flex; gap: 2px; }
.caption button { width: 31px; height: 14px; border: 1px solid #56708f; border-radius: 0 0 3px 3px; background: #bed0e5; padding-left: 10px; }
.caption i { display: block; width: 9px; height: 5px; margin-top: 3px; background: #fff; border: 1px solid #5b6470; }
.caption .close { background: linear-gradient(#c0604f, #d0705c); border-color: #6b2b2b; }
.address { display: flex; align-items: center; height: 38px; padding: 1px 2px 0; }
.address .plain + .plain { margin-left: 3px; }
.address .recent { width: 16px; justify-content: center; }
.urlbox, .searchbox { display: flex; align-items: center; height: 24px; background: #eaf1fa; border: 1px solid #98a9bd; border-top-color: #55606e; }
.urlbox { flex: 1; margin-left: 4px; padding-left: 4px; }
.url { flex: 1; margin-left: 4px; color: #777; }
.url b { color: #000; font-weight: normal; }
.lock { margin: 0 8px 0 10px; }
.cell { width: 25px; height: 22px; border-left: 1px solid #98a9bd; display: flex; align-items: center; justify-content: center; }
.searchbox { width: 298px; margin-left: 6px; padding: 0 4px; }
.searchbox input { flex: 1; min-width: 0; margin-left: 5px; border: 0; background: none; font-size: 12px; font-style: italic; }
.searchbox input::placeholder { color: #666; opacity: 1; }
.searchbox .tri { margin-left: 9px; }

/* favorites */
.favbar { display: flex; align-items: center; flex: none; height: 30px; padding-left: 8px; background: linear-gradient(#f6f9fe, #e0ebf8 20px); }
.favlabel { width: 57px; margin-left: 4px; }
.favbar .vsep { margin: 0 7px 0 3px; }
.fav { display: flex; align-items: center; gap: 4px; white-space: nowrap; }
.f1 { width: 176px; margin-left: 8px; }
.f2 { width: 132px; }
.f3 { width: 134px; }
.dim { color: #7a7a7a; }
.f3 .tri { color: #000; margin-left: 2px; }

/* tabs and commands */
.tabrow { display: flex; align-items: flex-end; flex: none; height: 28px; padding-left: 6px; background: #e0ebf8; border-bottom: 1px solid #868d99; }
.quick { width: 24px; height: 24px; border: 1px solid #99a3b3; border-bottom: 0; border-radius: 3px 0 0 0; display: flex; align-items: center; justify-content: center; background: #eef4fb; }
.quick.arrow { width: 15px; border-left: 0; border-radius: 0 3px 0 0; }
.tab { display: flex; align-items: center; width: 179px; height: 24px; padding: 0 6px 0 2px; gap: 4px; background: #dda0e6; border: 1px solid #868d99; border-bottom: 0; border-radius: 3px 3px 0 0; box-shadow: inset 0 0 0 1px #eed0f3; }
.tab.on { height: 26px; background: linear-gradient(#d58ee0, #f1f4fa); box-shadow: none; margin-bottom: -1px; padding-bottom: 2px; }
.tab .x { margin-left: auto; }
.newtab { width: 30px; height: 24px; border: 1px solid #868d99; border-bottom: 0; border-radius: 3px 3px 0 0; background: #e6effa; }
.commands { display: flex; align-items: center; margin-left: auto; height: 28px; padding: 0 4px 1px 0; }
.commands > svg { color: #000; }
.commands .c1 { margin: 0 12px 0 10px; }
.commands .dim { margin-right: 9px; color: #7a7a7a; }
.c3 { margin-left: 12px; }
.cmd { display: flex; align-items: center; gap: 3px; margin-right: 13px; white-space: nowrap; }
.cmd.help { gap: 1px; margin: 0 12px 0 0; }
.more { color: #4a68a8; font-size: 14px; margin-bottom: 14px; }

/* find bar */
.findbar { display: flex; align-items: center; flex: none; height: 31px; padding-left: 9px; background: #f1f4fa; }
.findbar label { margin-left: 10px; width: 31px; }
.findbar input { width: 294px; height: 22px; border: 1px solid #99a3b3; border-top-color: #666; background: #fff; }
.prev { margin: 0 14px 0 10px; }
.findbar .vsep { margin-left: 9px; }
.hilite { display: flex; align-items: center; justify-content: center; width: 24px; height: 20px; margin-left: 5px; border: 1px solid #555; border-radius: 3px; background: #dcdfe5; }
.options { gap: 8px; margin-left: 6px; }
.options + .vsep { margin-left: 7px; }

/* information bar */
.infobar { display: flex; align-items: center; flex: none; height: 25px; padding: 0 7px 0 4px; gap: 5px; background: #ffffe1; border-bottom: 2px solid #6b6f68; }
.infobar .plain { margin-left: auto; }

/* application page */
.page { flex: 1; min-height: 0; display: flex; flex-direction: column; gap: 9px; padding: 3px 17px 13px 11px; background: #e1eae7; border-left: 1px solid #666; font-size: 12px; }
.toolbox { flex: none; padding: 4px 0 0 1px; background: #eef2ff; border: 1px solid #bcbcbc; }
.tools { display: flex; align-items: center; height: 29px; padding-left: 4px; }
.pills { display: flex; gap: 2px; }
.slip { display: flex; align-items: center; gap: 7px; width: 117px; height: 27px; margin: 0 3px 0 1px; padding-left: 5px; border: 1px solid #fff; border-top-color: #888; border-left-color: #888; font: 10px/16px "Liberation Sans", sans-serif; white-space: nowrap; }
.select { position: relative; display: block; width: 240px; height: 21px; margin-left: 2px; }
.select select { width: 100%; height: 100%; appearance: none; padding-left: 4px; border: 1px solid #e3e3e3; background: #fff; font: 12px/16px "Liberation Sans", sans-serif; }
.select .tri { position: absolute; right: 4px; top: 9px; pointer-events: none; }
.go { margin: 0 3px 0 2px; }
.record { display: flex; align-items: center; gap: 2px; height: 27px; padding-top: 4px; font-size: 11px; }
.record b { color: #3a4a86; }
.ref { height: 20px; margin-right: 2px; padding: 0 2px; border: 1px solid #bcbcbc; background: #f0f0f0; line-height: 18px; }

.pane { flex: 1; min-height: 0; margin-right: 3px; display: flex; background: #fff; border: 1px solid #bcbcbc; }
.form { flex: 1; min-width: 0; overflow: hidden; padding: 6px 0 0 7px; }
.row { display: grid; grid-template-columns: 203px 52px 1fr; align-items: center; height: 24px; white-space: nowrap; line-height: 16px; }
.row.noted { grid-template-columns: 203px 52px 547px 1fr; }
.row.far { grid-template-columns: 203px 52px 661px 1fr; }
.row b { font-size: 11px; }
.row.h21 { height: 21px; }
.row.h22 { height: 22px; }
.row.h23 { height: 23px; }
.row.h80 { height: 80px; }
.marks { display: flex; align-items: center; }
.req { width: 7px; height: 7px; margin: 4px 7px 0 6px; }
.req.tight { margin-right: 4px; }
.ast { width: 8px; height: 8px; }
.near { margin-left: 3px; }
.arr { margin-left: 1px; }
.field { display: flex; align-items: center; gap: 2px; }
.field input { height: 18px; border: 1px solid #b4b4b4; background: #fff; }
.field svg { margin-top: 2px; }
.w79 { width: 79px; } .w85 { width: 85px; } .w127 { width: 127px; } .w139 { width: 139px; } .w151 { width: 151px; }
.w223 { width: 223px; } .w229 { width: 229px; } .w235 { width: 235px; } .w409 { width: 409px; }
.radios { display: flex; gap: 4px; padding-left: 5px; color: #8c9bbd; }
.radios label { display: flex; align-items: center; gap: 4px; }
.radios input { appearance: none; width: 11px; height: 11px; margin-bottom: 4px; border: 1px solid #ddd; border-top-color: #666; border-left-color: #666; border-radius: 50%; background: #fff; }
.radios input:checked { background: radial-gradient(#000 2px, #fff 3px); }
.note { color: #8c9bbd; }
.fixed { width: 87px; height: 16px; padding-left: 2px; border: 1px solid #bcbcbc; background: #f0f0f0; line-height: 14px; }
.area { display: flex; width: 224px; height: 74px; border: 1px solid #b4b4b4; }
.area textarea { flex: 1; min-width: 0; border: 0; resize: none; overflow: hidden; }
.bar { width: 16px; display: flex; flex-direction: column; justify-content: space-between; align-items: center; padding: 6px 0; background: #f0f0f0; color: #777; }
.scroll { width: 15px; display: flex; flex-direction: column; align-items: center; padding: 6px 0; background: #f0f0f0; color: #444; }
.track { flex: 1; width: 15px; padding-top: 7px; }
.thumb { display: flex; align-items: center; justify-content: center; height: 44%; border: 1px solid #8f8f8f; border-radius: 2px; background: linear-gradient(90deg, #f3f3f3 45%, #d2d2d6 60%, #c6c6cb); }
.thumb i { width: 7px; height: 8px; background: repeating-linear-gradient(#555 0 1px, #eee 1px 3px); }

/* status bar */
.status { display: flex; align-items: stretch; flex: none; height: 25px; padding-left: 2px; background: #f0eded; border-top: 1px solid #8c9290; line-height: 24px; }
.status > svg { margin: 4px 5px 0 0; }
.grow { flex: 1; }
.slot { width: 24px; border-left: 1px solid #d4d0d0; }
.zone { display: flex; align-items: center; gap: 4px; width: 270px; padding-left: 4px; border-left: 1px solid #d4d0d0; white-space: nowrap; }
.privacy { display: flex; align-items: center; gap: 7px; width: 45px; padding-left: 8px; border-left: 1px solid #d4d0d0; }
.zoom { display: flex; align-items: center; gap: 2px; width: 101px; padding-left: 10px; border-left: 1px solid #d4d0d0; }
.zoom .tri { margin-left: 20px; }
.zoom .grip { margin: 10px 1px 0 auto; }
.privacy .tri, .zoom .tri { color: #333; }

/* taskbar */
.taskbar { display: flex; flex: none; height: 32px; overflow: hidden; border-top: 2px solid #3c4757; background: linear-gradient(90deg, #7f95b2, #a6bfdc 120px, #a6bfdc calc(100% - 275px), #7d91aa calc(100% - 245px)); }
.start { padding-left: 7px; width: 57px; align-self: flex-start; }
.dots { width: 8px; height: 32px; margin-top: 2px; }
.tasks { display: flex; gap: 3px; margin-left: 9px; }
.tasks button { display: flex; justify-content: center; width: 59px; height: 44px; padding-top: 2px; }
.tasks .open { border: 1px solid #35465f; border-top: 0; border-radius: 2px; background: linear-gradient(135deg, #e6eef7, #b8cce3); box-shadow: inset 1px 0 #fff; }
.tray { display: flex; align-items: flex-start; margin-left: auto; padding-top: 8px; color: #fff; white-space: nowrap; }
.tray .dots { margin-top: -6px; }
.lang { margin: 0 15px 0 9px; font-size: 12px; line-height: 12px; }
.tray > svg + svg { margin-left: 9px; margin-top: 2px; }
.tray .up { margin-top: 8px; }
.clock { margin: -7px 0 0 19px; text-align: center; line-height: 16px; }
.peek { width: 14px; height: 40px; margin: -8px 0 0 12px; border-left: 1px solid #36455a; background: linear-gradient(90deg, #62758e, #8fa2b9); }

/* window behind */
.behind { width: 22px; flex: none; display: flex; flex-direction: column; padding-left: 10px; overflow: hidden; background: #f0f0f0; border-left: 1px solid #fff; font: 11px/16px "Noto Sans", sans-serif; }
.edge { height: 46px; padding: 20px 0 0 3px; }
.edge button { width: 20px; height: 23px; padding-left: 3px; border: 1px solid #888; border-radius: 3px; background: #fff; }
.list { display: flex; flex-direction: column; flex: 1; margin-bottom: 42px; border: 1px solid #707684; border-width: 1px 0 1px 1px; background: #fff; }
.list li { height: 16px; }
.list .in { padding-left: 5px; }
.folder { margin-left: 5px; background: linear-gradient(#f3eca5, #dcc95a); border-bottom: 1px solid #fff; }
.low { margin-top: auto; }
.foot { height: 18px; padding: 5px 0 0 6px; background: #f0f0f0; }
```
